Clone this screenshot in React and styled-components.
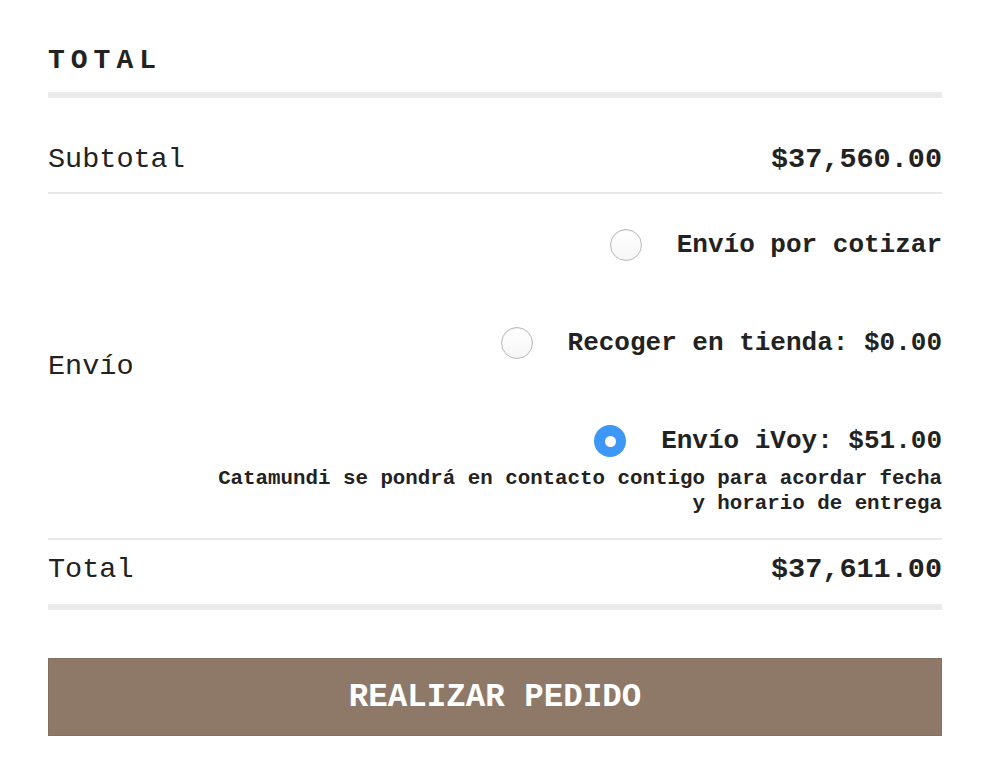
import React, { useState } from "react";
import styled, { createGlobalStyle } from "styled-components";

const GlobalStyle = createGlobalStyle`
  body {
    margin: 0;
    background: #fff;
    font-family: "Liberation Mono", "Courier New", monospace;
    color: #222;
  }
`;

const shippingOptions = [
  { id: "cotizar", label: "Envío por cotizar" },
  { id: "tienda", label: "Recoger en tienda: $0.00" },
  {
    id: "ivoy",
    label: "Envío iVoy: $51.00",
    note: "Catamundi se pondrá en contacto contigo para acordar fecha y horario de entrega"
  }
];

const Container = styled.div`
  width: 894px;
  margin-left: 48px;
`;

const Header = styled.div`
  padding: 47px 0 17px;
  border-bottom: 6px solid #ebebeb;
`;

const Title = styled.h2`
  margin: 0;
  font-size: 28px;
  line-height: 28px;
  font-weight: bold;
  letter-spacing: 6px;
  color: #222;
`;

const Row = styled.div`
  display: flex;
  justify-content: space-between;
  align-items: center;
  padding: ${props => props.pad};
  border-bottom: ${props => (props.thick ? "6px" : "2px")} solid
    ${props => (props.thick ? "#ebebeb" : "#e8e8e8")};
`;

const Label = styled.span`
  font-size: 28.5px;
  line-height: 29px;
`;

const Amount = styled.span`
  font-size: 28.5px;
  line-height: 29px;
  font-weight: bold;
`;

const Options = styled.div`
  display: flex;
  flex-direction: column;
  align-items: flex-end;
  gap: 66px;
  padding: 35px 0 22px;
`;

const Option = styled.label`
  display: flex;
  flex-direction: column;
  align-items: flex-end;
  cursor: pointer;
`;

const OptionLine = styled.div`
  display: flex;
  align-items: center;
  gap: 35px;
  height: 32px;
`;

const Radio = styled.span`
  box-sizing: border-box;
  width: 32px;
  height: 32px;
  border-radius: 50%;
  display: flex;
  align-items: center;
  justify-content: center;
  border: ${props => (props.checked ? "none" : "1px solid #b9b9b9")};
  background: ${props =>
    props.checked ? "#3c97f6" : "linear-gradient(#ffffff, #f6f6f6)"};
  box-shadow: ${props =>
    props.checked ? "none" : "inset 0 1px 1px rgba(0, 0, 0, 0.06)"};

  &::after {
    content: "";
    display: ${props => (props.checked ? "block" : "none")};
    width: 11px;
    height: 11px;
    border-radius: 50%;
    background: #fff;
  }
`;

const OptionText = styled.span`
  font-size: 26px;
  line-height: 26px;
  font-weight: bold;
`;

const Note = styled.p`
  margin: 9px 0 0;
  width: 740px;
  text-align: right;
  font-size: 20.8px;
  line-height: 25px;
  font-weight: bold;
`;

const Button = styled.button`
  display: block;
  box-sizing: border-box;
  width: 100%;
  height: 78px;
  margin-top: 48px;
  background: #8e7868;
  border: 1px solid #84705f;
  color: #fff;
  font-family: "Liberation Mono", "Courier New", monospace;
  font-size: 32.5px;
  font-weight: bold;
  cursor: pointer;
`;

function App() {
  const [selected, setSelected] = useState("ivoy");

  return (
    <Container>
      <GlobalStyle />
      <Header>
        <Title>TOTAL</Title>
      </Header>
      <Row pad="47px 0 18px">
        <Label>Subtotal</Label>
        <Amount>$37,560.00</Amount>
      </Row>
      <Row pad="0">
        <Label>Envío</Label>
        <Options>
          {shippingOptions.map(opt => (
            <Option key={opt.id} onClick={() => setSelected(opt.id)}>
              <OptionLine>
                <Radio checked={selected === opt.id} />
                <OptionText>{opt.label}</OptionText>
              </OptionLine>
              {opt.note && <Note>{opt.note}</Note>}
            </Option>
          ))}
        </Options>
      </Row>
      <Row pad="15px 0 20px" thick>
        <Label>Total</Label>
        <Amount>$37,611.00</Amount>
      </Row>
      <Button>REALIZAR PEDIDO</Button>
    </Container>
  );
}

export default App;
